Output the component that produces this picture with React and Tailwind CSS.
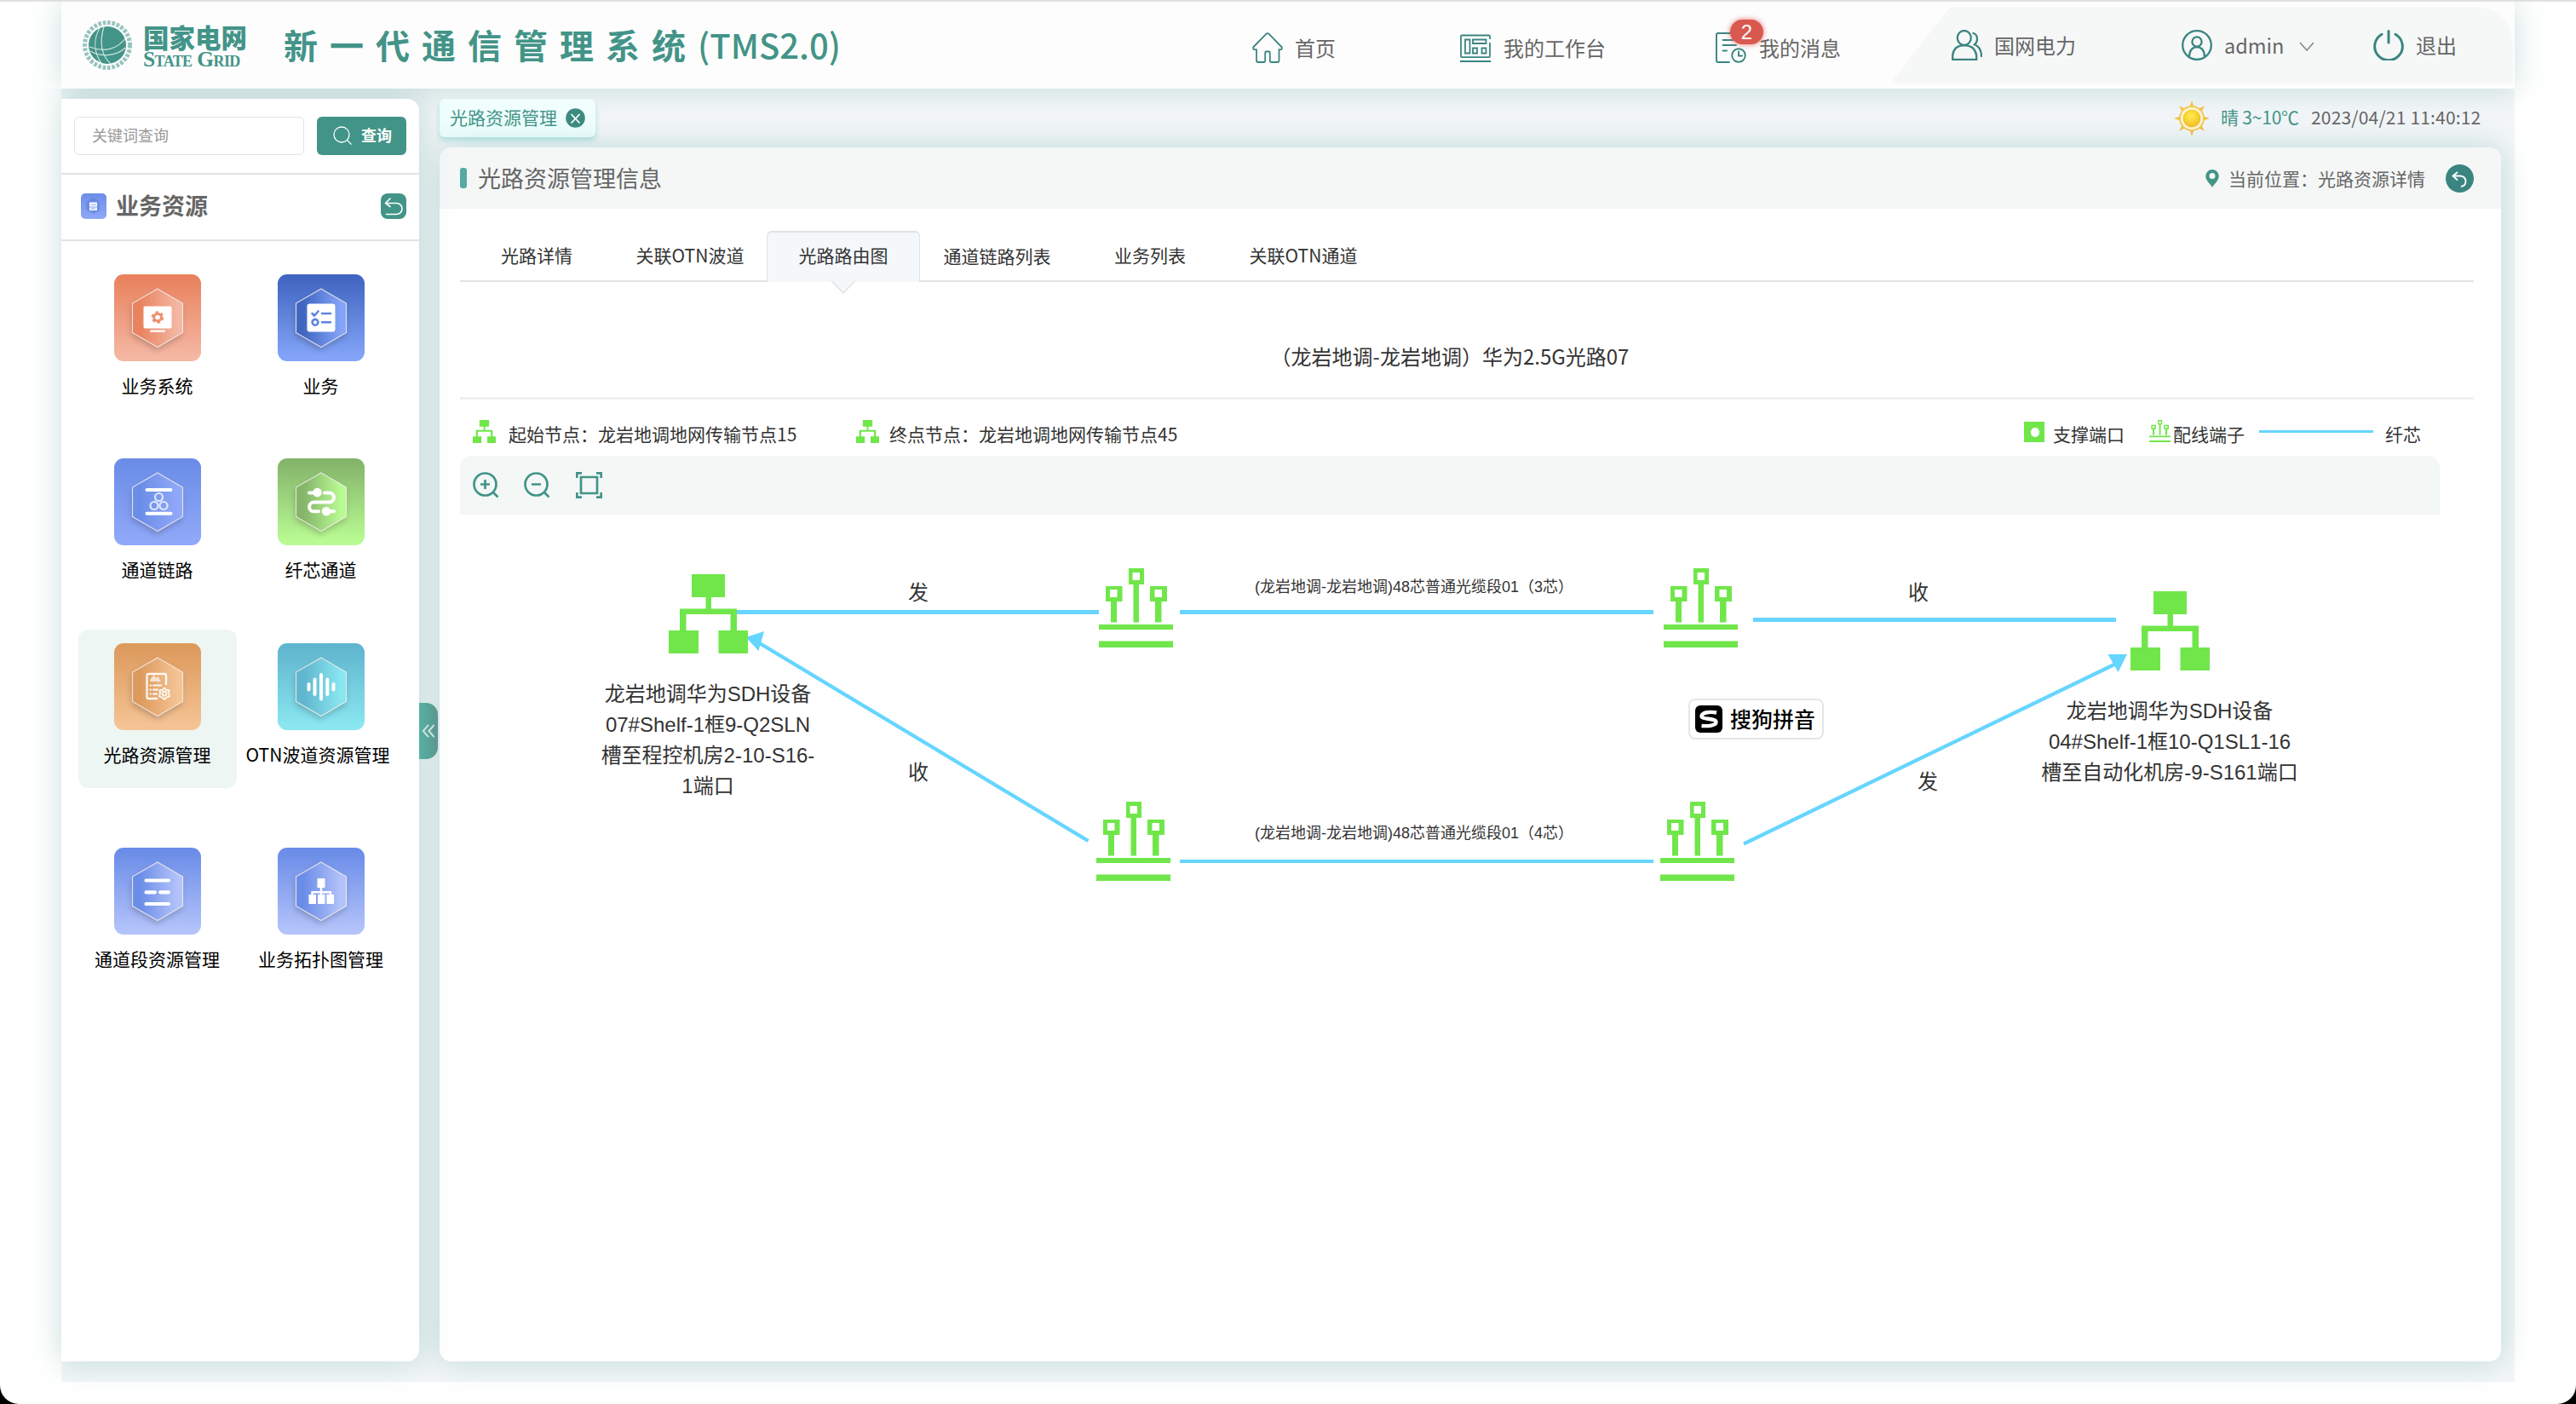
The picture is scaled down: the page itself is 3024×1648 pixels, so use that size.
import React from "react";

const teal = "#3a8580";

function Globe() {
  return (
    <svg className="h-[62px] w-[60px] shrink-0" viewBox="0 0 60 62" fill="none">
      <circle cx="30" cy="31" r="26.5" stroke="#439488" strokeWidth="5" strokeDasharray="3.6 1.8" opacity="0.55" />
      <circle cx="30" cy="31" r="22" fill="#439488" />
      <path d="M22 9C13 24 14 40 24 54M26 9C21 26 22 42 34 53M9 33C26 40 42 36 52 22M10 38C24 46 42 43 51 34" stroke="#fff" strokeWidth="1.2" opacity="0.75" />
    </svg>
  );
}

function HomeIcon() {
  return (
    <svg className="size-[36px] shrink-0" viewBox="0 0 36 36" fill="none" stroke={teal} strokeWidth="1.8" strokeLinejoin="round" strokeLinecap="round">
      <path d="M16.6 1.6Q18 .6 19.4 1.6L34.4 17Q35.6 19 34 20.2H31.5V33Q31.5 35 29.5 35H22Q20.8 35 20.8 33.5V24Q20.8 22.5 19.5 22.5H16.5Q15.2 22.5 15.2 24V33.5Q15.2 35 14 35H7Q5 35 5 33V20.2H2.2Q.4 19 1.6 17Z" />
    </svg>
  );
}

function WorkbenchIcon() {
  return (
    <svg className="size-[36px] shrink-0" viewBox="0 0 36 36" fill="none" stroke={teal} strokeWidth="1.8">
      <path d="M35 8V4.500Q35 3.500 34 3.500H2Q1 3.500 1 4.500V28Q1 29.200 2 29.200H34Q35 29.200 35 28V12" />
      <path d="M6 8.500H11.500V24.500H6ZM15 8.500H30.500V13H15ZM15 18.500H20V24.500H15ZM25.500 18.500H30.500V24.500H25.500ZM0 34H36" />
    </svg>
  );
}

function MessageIcon() {
  return (
    <svg className="size-[36px] shrink-0" viewBox="0 0 36 36" fill="none" stroke={teal} strokeWidth="1.9" strokeLinecap="round">
      <path d="M32 12V2.500Q32 1 30.500 1H2.500Q1 1 1 2.500V33.500Q1 35 2.500 35H16" />
      <path d="M8.500 9H24M8.500 15H24M8.500 21.500H13" />
      <circle cx="27" cy="27" r="7.800" />
      <path d="M27 22.500V27.500H31" />
    </svg>
  );
}

function UsersIcon() {
  return (
    <svg className="size-[36px] shrink-0" viewBox="0 0 36 36" fill="none" stroke={teal} strokeWidth="2.3" strokeLinecap="round">
      <ellipse cx="14.800" cy="9.500" rx="8" ry="8.500" />
      <path d="M1.200 34.800V30Q2.500 18.500 14.800 18.200Q27.500 18.500 29.200 30V34.800Z" />
      <path d="M25.500 4Q30 5 30 11Q30 15 27 17.200Q35 20.500 35 31" />
    </svg>
  );
}

function AvatarIcon() {
  return (
    <svg className="size-[36px] shrink-0" viewBox="0 0 36 36" fill="none" stroke={teal} strokeWidth="2.3">
      <circle cx="18" cy="18" r="16.800" />
      <circle cx="18" cy="14" r="5.600" />
      <path d="M9 31.500Q9.500 20.500 18 20.200Q26.500 20.500 27 31.500" />
    </svg>
  );
}

function PowerIcon() {
  return (
    <svg className="size-[36px] shrink-0" viewBox="0 0 36 36" fill="none" stroke={teal} strokeWidth="3" strokeLinecap="round">
      <path d="M10 5.200A16.300 16.300 0 1 0 26 5.200M18 1.500V15" />
    </svg>
  );
}

function SunIcon() {
  return (
    <svg className="size-[42px] shrink-0" viewBox="0 0 42 42">
      <defs>
        <radialGradient id="sun" cx="45%" cy="38%">
          <stop offset="0" stopColor="#fff04d" />
          <stop offset="1" stopColor="#f6c52e" />
        </radialGradient>
      </defs>
      {[0, 45, 90, 135, 180, 225, 270, 315].map((a) => (
        <path key={a} d="M21 0L24 9H18Z" fill="#f3bf4a" transform={`rotate(${a} 21 21)`} />
      ))}
      <circle cx="21" cy="21" r="15" fill="#f5c75a" />
      <circle cx="21" cy="21" r="13" fill="#fff8d8" />
      <circle cx="21" cy="21" r="10.500" fill="url(#sun)" />
    </svg>
  );
}

function TreeIcon({ className }) {
  return (
    <svg className={className} viewBox="0 0 93 93" fill="#70e64b" preserveAspectRatio="none">
      <path d="M27 0H66V27H50V40.500H80V66H93V93H58.500V66H72.500V47H20.500V66H35V93H0V66H13V40.500H43.500V27H27Z" />
    </svg>
  );
}

function TerminalIcon({ className }) {
  return (
    <svg className={className} viewBox="0 0 87 93" fill="#70e64b" fillRule="evenodd" preserveAspectRatio="none">
      <path d="M35 0H53V19H47V63.500H40.500V19H35ZM39.500 5V14H48V5Z" />
      <path d="M8 21H27.500V39H21V63.500H14V39H8ZM13 25V34H21.500V25Z" />
      <path d="M60 21H80V39H73.500V63.500H66V39H60ZM65.500 25V34H74V25Z" />
      <path d="M0 66H87V72H0ZM0 85.500H87V93H0Z" />
    </svg>
  );
}

const glyphs = {
  system: (
    <>
      <rect x="34.500" y="37.500" width="33" height="26" rx="2" fill="#fff" />
      <rect x="42" y="65.500" width="18" height="2.200" rx="1" fill="#fff" />
      <circle cx="51" cy="50.500" r="4.300" stroke="#ec8f6e" strokeWidth="3" fill="none" />
      <circle cx="51" cy="50.500" r="6.300" stroke="#ec8f6e" strokeWidth="2" strokeDasharray="3.300 3.300" fill="none" />
    </>
  ),
  list: (
    <>
      <rect x="34.500" y="34.500" width="33" height="33" rx="3" fill="#fff" />
      <g stroke="#5f83dd" strokeWidth="2.600" fill="none" strokeLinecap="round" strokeLinejoin="round">
        <path d="M40.500 46L43 48.500L47.500 43.500M52 46H62M52 56.300H62" />
        <circle cx="44" cy="56.300" r="3.400" />
      </g>
    </>
  ),
  link: (
    <>
      <path d="M38.500 37H66.500M38.500 64.700H66.500" stroke="#fff" strokeWidth="4" strokeLinecap="round" />
      <g stroke="#dfe7ff" strokeWidth="2.200" fill="none">
        <circle cx="52.500" cy="45.500" r="4.500" />
        <circle cx="47" cy="55.500" r="4.500" />
        <circle cx="58" cy="55.500" r="4.500" />
      </g>
    </>
  ),
  route: (
    <g stroke="#fff" strokeWidth="4" fill="none" strokeLinecap="round">
      <path d="M37 40.500H43M55 40.500H60.500A5.500 5.500 0 0 1 60.500 51.500H42.500A5.400 5.400 0 0 0 42.500 62.300H48M56 62.300H66" />
      <circle cx="46.500" cy="40" r="3.800" fill="#fff" strokeWidth="3" />
      <circle cx="57" cy="62.300" r="3.800" fill="#fff" strokeWidth="3" />
    </g>
  ),
  doc: (
    <g stroke="#fff" fill="none" strokeWidth="2.400" strokeLinecap="round" opacity="0.9">
      <path d="M61 48V38Q61 36 59 36H40.500Q38.500 36 38.500 38V63Q38.500 65 40.500 65H50" />
      <path d="M43.500 43.500L46 40.500V43.800M48.500 41V43.800M51.500 41V43.800H53" strokeWidth="3" opacity="0.75" />
      <path d="M42.500 49.500H43M46 49.500H55M42.500 54.500H43M46 54.500H51M42.500 59.500H43M46 59.500H50" strokeWidth="2.200" />
      <circle cx="59" cy="59" r="2.500" strokeWidth="1.800" />
      <path d="M59 52.500L61 54.700L64.600 55.500L64 59L65 62.400L61.500 63.500L59 66L56.500 63.500L53 62.400L54 59L53.400 55.500L57 54.700Z" strokeWidth="1.800" strokeLinejoin="round" />
    </g>
  ),
  wave: (
    <path d="M36.500 48V54.500M43.500 42.500V60M51 37V65.500M58.300 42.500V60M65.500 48V54.500" stroke="#fff" strokeWidth="4" strokeLinecap="round" />
  ),
  lines: (
    <path d="M37.500 38.500H64M37.500 52.300H48M54 52.300H64M37.500 66H64" stroke="#fff" strokeWidth="4.200" strokeLinecap="round" />
  ),
  topo: (
    <>
      <path d="M46.500 36H55.500V47H46.500ZM36.500 55H45V66H36.500ZM47 55H55.500V66H47ZM57.500 55H66V66H57.500Z" fill="#fff" />
      <path d="M51 47V55M40.500 56V52.300H62V56" stroke="#fff" strokeWidth="2.400" fill="none" />
    </>
  ),
};

function TileIcon({ id, from, to, kind }) {
  return (
    <svg className="size-[102px] shrink-0" viewBox="0 0 102 102">
      <defs>
        <linearGradient id={`v-${id}`} x1="0" y1="0" x2="0" y2="1">
          <stop offset="0.050" stopColor={from} />
          <stop offset="0.950" stopColor={to} />
        </linearGradient>
        <linearGradient id={`h-${id}`} x1="0" y1="0" x2="1" y2="0">
          <stop offset="0.150" stopColor={from} />
          <stop offset="0.900" stopColor={to} />
        </linearGradient>
        <filter id={`s-${id}`} x="-30%" y="-30%" width="160%" height="160%">
          <feDropShadow dx="-1" dy="4" stdDeviation="3.5" floodColor="#000" floodOpacity="0.200" />
        </filter>
      </defs>
      <rect width="102" height="102" rx="11" fill={`url(#v-${id})`} />
      <path d="M51 17L80.500 34V68.500L51 85.500L21.500 68.500V34Z" fill={`url(#h-${id})`} filter={`url(#s-${id})`} />
      <path d="M51 17L80.500 34V68.500L51 85.500L21.500 68.500V34Z" fill="none" stroke="#f3ece9" strokeWidth="1.200" opacity="0.850" />
      {glyphs[kind]}
    </svg>
  );
}

const tiles = [
  [
    { label: "业务系统", from: "#e9835f", to: "#f4b7a3", kind: "system" },
    { label: "业务", from: "#4166c1", to: "#83a4f8", kind: "list" },
  ],
  [
    { label: "通道链路", from: "#6b8de8", to: "#90a8f8", kind: "link" },
    { label: "纤芯通道", from: "#85b56b", to: "#b9fb93", kind: "route" },
  ],
  [
    { label: "光路资源管理", from: "#dd9a5d", to: "#f4c394", kind: "doc", active: true },
    { label: "OTN波道资源管理", from: "#60b6ce", to: "#8ae6f0", kind: "wave" },
  ],
  [
    { label: "通道段资源管理", from: "#6b8de8", to: "#b3c3fa", kind: "lines" },
    { label: "业务拓扑图管理", from: "#6b8de8", to: "#b3c3fa", kind: "topo" },
  ],
];

function Tile({ tile, id }) {
  return (
    <div className={"flex h-[186px] w-[186px] shrink-0 flex-col items-center rounded-[12px] pt-[16px] " + (tile.active ? "bg-[#edf6f3]" : "")}>
      <TileIcon id={id} from={tile.from} to={tile.to} kind={tile.kind} />
      <div className={"mt-[12px] h-8 text-[21px] leading-8 whitespace-nowrap text-black " + (tile.label.startsWith("OTN") ? "-ml-2" : "-ml-px")}>{tile.label}</div>
    </div>
  );
}

function Header() {
  return (
    <header className="flex h-[102px] w-[2880px] shrink-0 items-center bg-[#fdfdfd] text-[24px] leading-9 whitespace-nowrap text-[#666] shadow-[0_0_36px_rgba(67,148,136,0.28)]">
      <div className="ml-6"><Globe /></div>
      <div className="ml-[12px] flex w-[124px] flex-col pt-[4px] text-[#439488]">
        <span className="font-['Liberation_Sans','Noto_Sans_CJK_SC',sans-serif] text-[30.5px] leading-[30px] font-black">国家电网</span>
        <span className="font-['Liberation_Serif',serif] text-[25.5px] leading-[20px] font-bold tracking-[-0.6px] [font-variant-caps:small-caps]">State Grid</span>
      </div>
      <h1 className="-mt-[3px] ml-[41px] flex w-[655px] items-center text-[40px] leading-[60px] font-bold text-[#439488]">
        <span className="tracking-[14px]">新一代通信管理系统</span>
        <span className="font-medium">(TMS2.0)</span>
      </h1>
      <div className="mt-[6px] ml-[482px] flex items-center gap-[14px]"><HomeIcon /><span>首页</span></div>
      <div className="mt-[6px] ml-[146px] flex items-center gap-[15px]"><WorkbenchIcon /><span>我的工作台</span></div>
      <div className="relative mt-[6px] ml-[129px] flex items-center gap-[15px]">
        <MessageIcon /><span>我的消息</span>
        <span className="absolute top-[-15px] left-[17px] flex h-[29px] w-[39px] items-center justify-center rounded-full bg-[#d95850] font-['Liberation_Sans',sans-serif] text-[24px] leading-none text-white shadow-[0_0_6px_rgba(217,88,80,0.8)]">2</span>
      </div>
      <div className="relative ml-[62px] flex h-[90px] w-[727px] items-center">
        <svg className="absolute inset-0 h-full w-full" viewBox="0 0 727 90">
          <path d="M73 0H683Q718 2 725 32Q727 40 727 50V90H5Q-1 89 .5 84L60 8Q65 0 73 0Z" fill="#f6f8f8" />
        </svg>
        <div className="relative flex items-center pl-[68px]">
          <UsersIcon /><span className="ml-[14px] w-[96px]">国网电力</span>
          <div className="ml-[124px]"><AvatarIcon /></div>
          <span className="ml-[14px] w-[66px] text-[23.5px]">admin</span>
          <svg className="mt-1 ml-[22px] h-[12px] w-[18px] shrink-0" viewBox="0 0 18 12" fill="none" stroke="#888" strokeWidth="1.600"><path d="M1 1L9 10L17 1" /></svg>
          <div className="ml-[69px]"><PowerIcon /></div>
          <span className="ml-[14px]">退出</span>
        </div>
      </div>
    </header>
  );
}

function Sidebar() {
  return (
    <aside className="relative h-[1482px] w-[420px] shrink-0 rounded-r-[14px] bg-white shadow-[0_0_36px_rgba(67,148,136,0.3)]">
      <div className="flex h-[87px] items-center pl-[15px]">
        <div className="flex h-[45px] w-[270px] items-center rounded-[6px] border border-[#e2e2e2] pb-[2px] pl-5 text-[18px] text-[#999]">关键词查询</div>
        <div className="ml-[15px] flex h-[45px] w-[105px] items-center rounded-[6px] bg-[#439488] pl-[19px] text-[18px] font-bold text-white">
          <svg className="mr-[10px] size-[23px]" viewBox="0 0 23 23" fill="none" stroke="#fff" strokeWidth="1.300"><circle cx="10" cy="10" r="9" /><path d="M16.500 16.500L21.500 21.500" /></svg>
          <span className="-mt-[2px]">查询</span>
        </div>
      </div>
      <div className="flex h-[80px] items-center border-y-2 border-[#e2e2e2] pb-[2px] pl-[23px]">
        <svg className="size-[30px]" viewBox="0 0 30 30">
          <defs><linearGradient id="mini" x1="0" y1="0" x2="0" y2="1"><stop offset="0" stopColor="#6b8de8" /><stop offset="1" stopColor="#90a8f8" /></linearGradient></defs>
          <rect width="30" height="30" rx="5" fill="url(#mini)" />
          <path d="M15 5L22 10V20L15 24L6 19V10Z" fill="#5f80dc" opacity="0.600" />
          <rect x="10" y="10.500" width="9" height="9.500" fill="#fff" />
          <path d="M11.500 14L13 12.500L14.500 14L16.500 12.500L18 14M10 16H19M11.500 18H17" stroke="#7e9af0" strokeWidth="1" fill="none" />
        </svg>
        <span className="-mt-[2px] ml-[11px] w-[108px] text-[27px] leading-9 font-bold whitespace-nowrap text-[#666]">业务资源</span>
        <svg className="ml-[203px] size-[30px]" viewBox="0 0 30 30" fill="none">
          <rect width="30" height="30" rx="8" fill="#439488" />
          <path d="M11 6L5.500 11.500L11 15.500M6 11.500H18.500A6.400 6.400 0 0 1 18.500 24.500H6.500" stroke="#fff" strokeWidth="1.600" strokeLinecap="round" strokeLinejoin="round" />
        </svg>
      </div>
      <div className="flex flex-col gap-[30px] pt-[23px] pl-5">
        {tiles.map((row, r) => (
          <div key={r} className={"flex gap-[6px] " + (r === 2 ? "mt-px" : r === 3 ? "mt-[24px]" : "")}>
            {row.map((t, c) => <Tile key={t.label} tile={t} id={`${r}${c}`} />)}
          </div>
        ))}
      </div>
      <div className="absolute top-[709px] left-[420px] flex h-[66px] w-[22px] items-center justify-center rounded-r-[14px] bg-linear-to-r from-[#55b1a4] to-[#5b958f]">
        <svg className="h-[16px] w-[16px]" viewBox="0 0 18 18" fill="none" stroke="#cfe3e0" strokeWidth="2.200"><path d="M9 1L2 9L9 17M16.500 1L9.500 9L16.500 17" /></svg>
      </div>
    </aside>
  );
}

const tabs = ["光路详情", "关联OTN波道", "光路路由图", "通道链路列表", "业务列表", "关联OTN通道"];

function Tabs() {
  return (
    <div className="mx-6 mt-[26px] flex h-[60px] w-[2364px] shrink-0 border-b-2 border-[#e2e2e2] text-[21px]">
      {tabs.map((t, i) => (
        <div key={t} className={"relative flex h-[60px] w-[180px] justify-center leading-8 text-[#333] " + (i === 2 ? "rounded-t-[6px] border border-t-2 border-b-0 border-[#e2e2e2] bg-[#f4f8fb] pt-[10px]" : i === 3 ? "pt-[13px] pl-px" : "pt-[12px]")}>
          {t}
          {i === 2 && (
            <svg className="absolute top-[55px] left-[75px] h-[17px] w-[28px]" viewBox="0 0 28 17">
              <path d="M0 0H28V2L14 16L0 2Z" fill="#f4f8fb" />
              <path d="M0 1.500L14 16L28 1.500" fill="none" stroke="#e2e2e2" strokeWidth="1.500" />
            </svg>
          )}
        </div>
      ))}
    </div>
  );
}

function Legend() {
  return (
    <div className="flex h-[66px] shrink-0 items-center pt-[8px] pl-[39px] text-[21px] leading-8 whitespace-nowrap text-[#333]">
      <TreeIcon className="h-[27px] w-[27px] shrink-0" />
      <span className="mt-[5px] ml-[15px] w-[340px]">起始节点：龙岩地调地网传输节点15</span>
      <TreeIcon className="ml-[68px] h-[27px] w-[27px] shrink-0" />
      <span className="mt-[5px] ml-[12px] w-[340px]">终点节点：龙岩地调地网传输节点45</span>
      <span className="mt-[2px] ml-[992px] flex size-6 items-center justify-center bg-[#70e64b]"><span className="mr-[-2px] h-[11px] w-[10px] rounded-full bg-white" /></span>
      <span className="mt-[5px] ml-[10px] w-[84px]">支撑端口</span>
      <TerminalIcon className="ml-[29px] h-[26px] w-[25px] shrink-0" />
      <span className="mt-[5px] ml-[3px] w-[84px]">配线端子</span>
      <span className="ml-[17px] h-[3px] w-[134px] bg-[#66d5ff]" />
      <span className="mt-[5px] ml-[14px]">纤芯</span>
    </div>
  );
}

function Toolbar() {
  return (
    <div className="ml-6 flex h-[69px] w-[2324px] shrink-0 items-center rounded-t-[14px] bg-[#f3f7f6] pl-[15px]">
      <svg className="size-[31px]" viewBox="0 0 31 31" fill="none" stroke="#439488" strokeWidth="2.700"><circle cx="14.500" cy="14.500" r="13" /><path d="M24 24L29.500 29.500M14.500 9V20M9 14.500H20" /></svg>
      <svg className="ml-[29px] size-[31px]" viewBox="0 0 31 31" fill="none" stroke="#439488" strokeWidth="2.700"><circle cx="14.500" cy="14.500" r="13" /><path d="M24 24L29.500 29.500M9 14.500H20" /></svg>
      <svg className="ml-[30px] size-[31px]" viewBox="0 0 31 31" fill="none" stroke="#439488" strokeWidth="2.700"><path d="M1.300 7V1.300H7M24 1.300H29.700V7M29.700 24V29.700H24M7 29.700H1.300V24M6 6H25V25H6Z" /></svg>
    </div>
  );
}

function Diagram() {
  return (
    <div className="relative h-[900px] w-[2420px] text-[24px] leading-9 whitespace-nowrap text-[#333]">
      <svg className="absolute inset-0 h-full w-full" viewBox="516 604 2420 900" stroke="#66d5ff" fill="#66d5ff">
        <path d="M864 718.500H1290M1385 718.500H1941M2058 727.500H2484" strokeWidth="5" />
        <path d="M1385 1011H1941" strokeWidth="4" />
        <path d="M890 754L1277.500 987M2047 990.500L2484 779" strokeWidth="4.300" />
        <path d="M875.500 748L897 741L890.500 764ZM2474.500 768H2497L2486.500 789Z" stroke="none" />
      </svg>
      <TreeIcon className="absolute top-[70px] left-[269px] h-[93px] w-[93px]" />
      <TreeIcon className="absolute top-[90px] left-[1985px] h-[93px] w-[93px]" />
      <TerminalIcon className="absolute top-[63px] left-[774px] h-[93px] w-[87px]" />
      <TerminalIcon className="absolute top-[63px] left-[1437px] h-[93px] w-[87px]" />
      <TerminalIcon className="absolute top-[337px] left-[771px] h-[93px] w-[87px]" />
      <TerminalIcon className="absolute top-[337px] left-[1433px] h-[93px] w-[87px]" />
      <div className="absolute top-[193px] left-[165px] w-[300px] text-center font-['Liberation_Sans','Noto_Sans_CJK_SC',sans-serif]">
        龙岩地调华为SDH设备<br />07#Shelf-1框9-Q2SLN<br />槽至程控机房2-10-S16-<br />1端口
      </div>
      <div className="absolute top-[213px] left-[1861px] w-[340px] text-center font-['Liberation_Sans','Noto_Sans_CJK_SC',sans-serif]">
        龙岩地调华为SDH设备<br />04#Shelf-1框10-Q1SL1-16<br />槽至自动化机房-9-S161端口
      </div>
      <span className="absolute top-[72px] left-[550px]">发</span>
      <span className="absolute top-[283px] left-[550px]">收</span>
      <span className="absolute top-[72px] left-[1724px]">收</span>
      <span className="absolute top-[294px] left-[1735px]">发</span>
      <span className="absolute top-[67px] left-[957px] font-['Liberation_Sans','Noto_Sans_CJK_SC',sans-serif] text-[18px]">(龙岩地调-龙岩地调)48芯普通光缆段01（3芯）</span>
      <span className="absolute top-[356px] left-[957px] font-['Liberation_Sans','Noto_Sans_CJK_SC',sans-serif] text-[18px]">(龙岩地调-龙岩地调)48芯普通光缆段01（4芯）</span>
      <div className="absolute top-[216px] left-[1466px] flex h-[48px] w-[159px] items-center rounded-[8px] border-2 border-[#e6e6e6] bg-white pl-[6px] text-[25px] font-medium text-black">
        <svg className="mr-[9px] size-[32px] shrink-0" viewBox="0 0 32 32">
          <rect width="32" height="32" rx="6" fill="#000" />
          <path d="M25 8.500C17 7 8.500 8 7.500 12.500C7 17 24 14.500 24.500 19.500C24.500 24 15 24.500 7.500 24" fill="none" stroke="#fff" strokeWidth="4.400" />
        </svg>
        <span className="-mt-[2px]">搜狗拼音</span>
      </div>
    </div>
  );
}

function Main() {
  return (
    <main className="ml-6 flex w-[2436px] shrink-0 flex-col">
      <div className="flex h-[45px] items-center whitespace-nowrap">
        <div className="flex h-[45px] w-[183px] items-center rounded-[6px] bg-[#f0fffe] pl-3 text-[21px] leading-8 text-[#439488] shadow-[0_4px_6px_rgba(90,200,195,0.4)]">
          <span className="-mt-[3px]">光路资源管理</span>
          <svg className="ml-[10px] size-[23px]" viewBox="0 0 23 23"><circle cx="11.500" cy="11.500" r="11.300" fill="#3d8c80" /><path d="M6.500 7L16.500 17.500M16.500 7L6.500 17.500" stroke="#fff" strokeWidth="1.800" /></svg>
        </div>
        <div className="ml-[1853px]"><SunIcon /></div>
        <span className="-mt-[3px] ml-[13px] w-[92px] text-[21px] leading-8 tracking-[-0.2px] text-[#439488]">晴 3~10℃</span>
        <span className="-mt-[3px] ml-[14px] text-[21px] leading-8 tracking-[0.18px] text-[#666]">2023/04/21 11:40:12</span>
      </div>
      <section className="mt-3 flex h-[1425px] w-[2420px] flex-col overflow-hidden rounded-[14px] bg-white shadow-[0_0_36px_rgba(67,148,136,0.3)]">
        <div className="flex h-[72px] shrink-0 items-center bg-[#f5f7f7] pl-6 whitespace-nowrap text-[#666]">
          <span className="h-6 w-2 rounded-[3px] bg-[#55aaa2]" />
          <span className="-mt-px ml-[13px] w-[216px] text-[27px] leading-10">光路资源管理信息</span>
          <svg className="ml-[1812px] h-[21px] w-[16px]" viewBox="0 0 16 21"><path fillRule="evenodd" d="M8 0A7.700 7.700 0 0 0 .3 7.700C.3 13 6 17 8 21C10 17 15.700 13 15.700 7.700A7.700 7.700 0 0 0 8 0ZM8 4A3.500 3.500 0 1 1 8 11A3.500 3.500 0 0 1 8 4Z" fill="#439488" /></svg>
          <span className="-mt-px ml-[11px] w-[231px] text-[21px] leading-8">当前位置：光路资源详情</span>
          <svg className="ml-[24px] size-[33px]" viewBox="0 0 33 33" fill="none"><circle cx="16.500" cy="16.500" r="16.500" fill="#3a8580" /><path d="M14 9L8.500 13.500L14 18.500M9 13.500H17Q23.500 14 23.500 20Q23.500 25 18 26" stroke="#fff" strokeWidth="1.900" /></svg>
        </div>
        <Tabs />
        <div className="mx-6 flex h-[138px] w-[2364px] shrink-0 items-center justify-center border-b-3 border-[#f0f0f0] pt-[38px] pr-[40px] text-[24px] leading-9 text-[#333]">（龙岩地调-龙岩地调）华为2.5G光路07</div>
        <Legend />
        <Toolbar />
        <Diagram />
      </section>
    </main>
  );
}

export default function App() {
  return (
    <div className="h-[1648px] w-[3024px] bg-black font-['Noto_Sans_CJK_SC',sans-serif]">
      <div className="flex h-[1648px] w-[3024px] flex-col overflow-hidden rounded-b-[22px] border-t-2 border-[#e0e0e0] bg-white pl-[72px]">
        <div className="flex h-[1620px] w-[2880px] shrink-0 flex-col bg-[#f3f6f8]">
          <Header />
          <div className="flex pt-3 [clip-path:inset(0_-80px_-80px_-80px)]">
            <Sidebar />
            <Main />
          </div>
        </div>
      </div>
    </div>
  );
}
